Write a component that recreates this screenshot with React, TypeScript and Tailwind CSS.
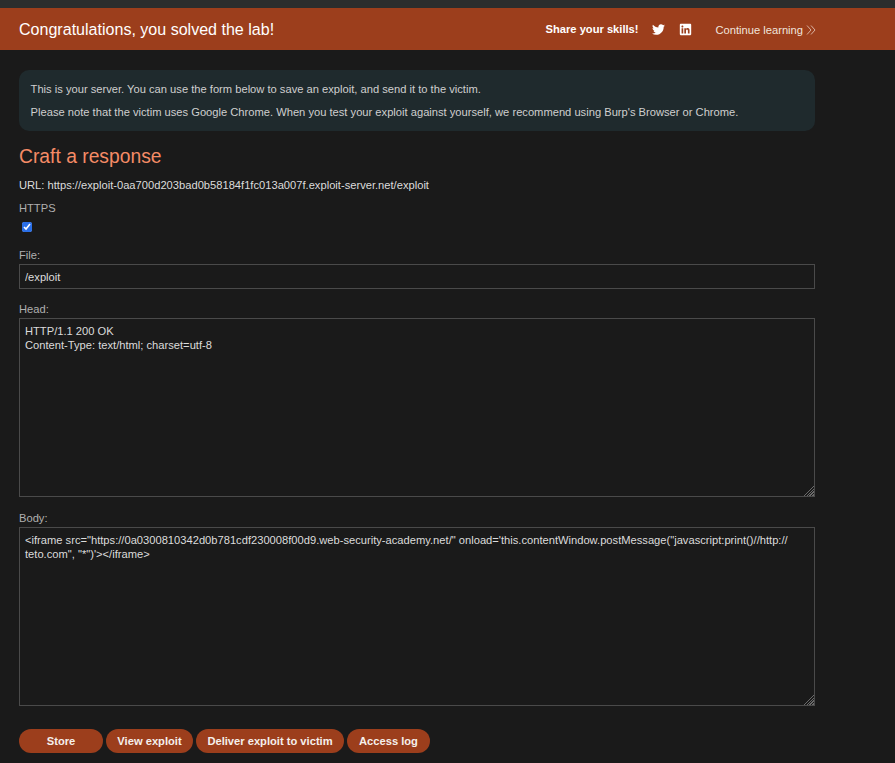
import { FaTwitter, FaLinkedin } from "react-icons/fa";

const headValue = "HTTP/1.1 200 OK\nContent-Type: text/html; charset=utf-8";
const bodyValue =
  '<iframe src="https://0a0300810342d0b781cdf230008f00d9.web-security-academy.net/" onload=\'this.contentWindow.postMessage("javascript:print()//http://\nteto.com", "*")\'></iframe>';

const fieldClass =
  "block w-[796px] border border-[#4a4a4a] bg-[#1a1a1a] px-[5px] text-[11.17px] leading-[14px] text-[#dcdcdc] outline-none [color-scheme:dark]";
const areaClass =
  "mt-[2px] h-[179px] resize py-[5px] [&::-webkit-resizer]:bg-[linear-gradient(135deg,#1a1a1a_50%,transparent_50%),repeating-linear-gradient(135deg,#6a6a6a_0,#6a6a6a_1px,#1a1a1a_1px,#1a1a1a_2px)] [&::-webkit-resizer]:bg-[length:11px_11px] [&::-webkit-resizer]:bg-right-bottom [&::-webkit-resizer]:bg-no-repeat";

function Btn({ label, className }: { label: string; className: string }) {
  return (
    <button
      type="button"
      className={`h-6 rounded-[12px] bg-[#9c3e1c] text-center text-[11.17px] font-bold text-[#f5f0ec] ${className}`}
    >
      {label}
    </button>
  );
}

export default function App() {
  return (
    <div className="h-[763px] w-[895px] overflow-hidden bg-[#1a1a1a] font-['Liberation_Sans',Arial,sans-serif] text-[#d9d9d9]">
      <div className="h-2 bg-[#2b2d2d]" />
      <div className="flex h-[42px] items-center bg-[#9c3e1c] pl-[19px] pr-[79px] pt-[1px]">
        <h4 className="text-[16.06px] text-white">Congratulations, you solved the lab!</h4>
        <div className="ml-auto flex items-center">
          <span className="text-[11.17px] font-bold text-white">Share your skills!</span>
          <FaTwitter className="ml-[13px] h-[13px] w-[13px] text-white" />
          <FaLinkedin className="ml-[14px] h-[13px] w-[13px] text-white" />
          <span className="ml-[24px] mt-[2px] text-[11.17px] text-[#f0e4dd]">Continue learning</span>
          <svg viewBox="0 0 10 10" className="ml-[3px] h-[10px] w-[10px] text-[#e8cfc3]" fill="none" stroke="currentColor" strokeWidth="0.8">
            <path d="M1 0.5 L5 5 L1 9.5" />
            <path d="M5 0.5 L9 5 L5 9.5" />
          </svg>
        </div>
      </div>

      <div className="px-[19px] pt-5">
        <div className="h-[61px] w-[796px] rounded-[10px] bg-[#1f2a2d] px-[11.6px] pt-[12px] text-[11.17px] leading-[14px] text-[#cfcfcf]">
          <p>This is your server. You can use the form below to save an exploit, and send it to the victim.</p>
          <p className="mt-[9px]">
            Please note that the victim uses Google Chrome. When you test your exploit against yourself, we recommend using Burp's Browser or Chrome.
          </p>
        </div>

        <h2 className="mt-[14px] text-[19.3px] leading-[24px] text-[#f58b66]">Craft a response</h2>
        <p className="mt-[9px] text-[11.17px] leading-[14px] text-[#dcdcdc]">
          URL: https://exploit-0aa700d203bad0b58184f1fc013a007f.exploit-server.net/exploit
        </p>

        <form>
          <label className="mt-[9px] block text-[11.17px] leading-[14px] text-[#b0b0b0]">HTTPS</label>
          <input type="checkbox" defaultChecked className="mt-[7px] ml-[3px] block h-[10px] w-[10px] accent-[#2a6fe8]" />

          <label className="mt-[16px] block text-[11.17px] leading-[14px] text-[#b0b0b0]">File:</label>
          <input type="text" defaultValue="/exploit" className={`${fieldClass} mt-[2px] h-[25px]`} />

          <label className="mt-[13px] block text-[11.17px] leading-[14px] text-[#b0b0b0]">Head:</label>
          <textarea defaultValue={headValue} className={`${fieldClass} ${areaClass}`} />

          <label className="mt-[14px] block text-[11.17px] leading-[14px] text-[#b0b0b0]">Body:</label>
          <textarea defaultValue={bodyValue} className={`${fieldClass} ${areaClass}`} />

          <div className="mt-[23px] flex gap-[3px]">
            <Btn label="Store" className="w-[84px]" />
            <Btn label="View exploit" className="w-[87px]" />
            <Btn label="Deliver exploit to victim" className="w-[148px]" />
            <Btn label="Access log" className="w-[83px]" />
          </div>
        </form>
      </div>
    </div>
  );
}
